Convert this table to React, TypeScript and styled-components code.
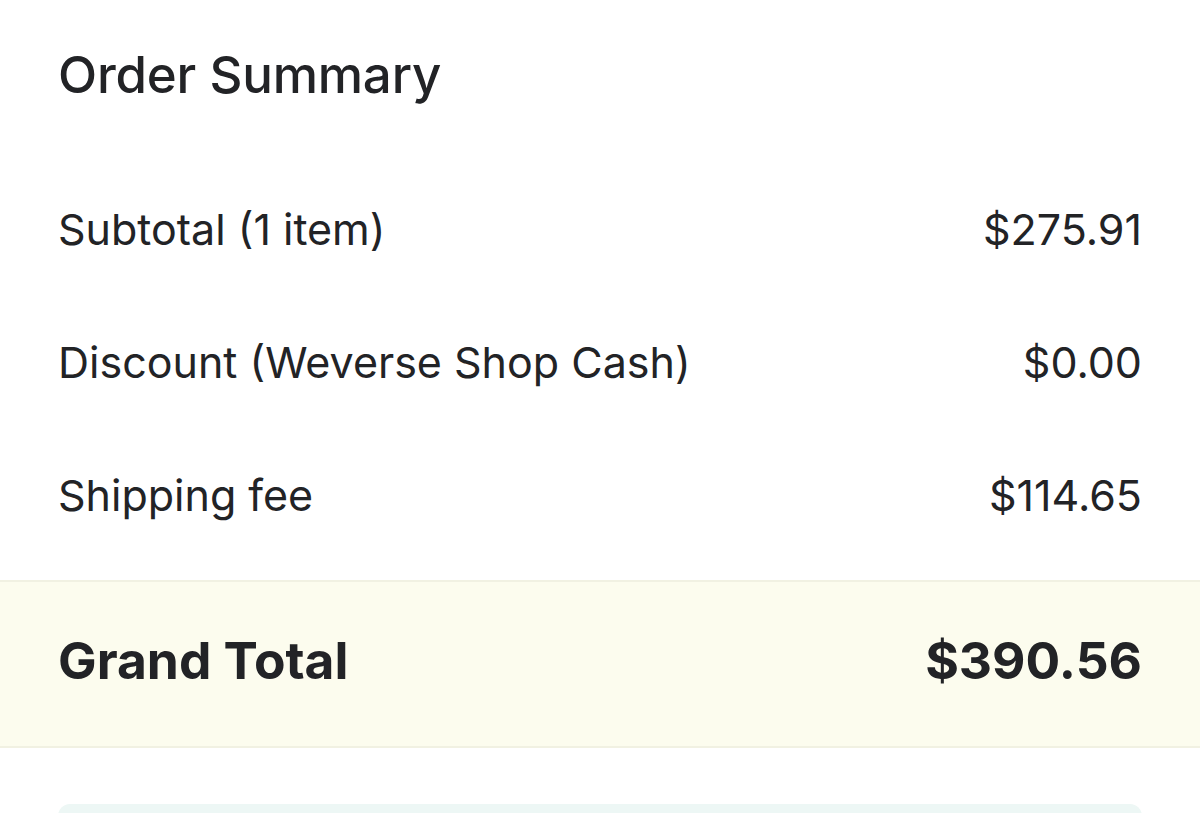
import React from 'react';
import styled, { createGlobalStyle } from 'styled-components';

const GlobalStyle = createGlobalStyle`
  html, body {
    margin: 0;
    padding: 0;
    background: #ffffff;
  }
  body {
    font-family: Inter, "Noto Sans", "Liberation Sans", sans-serif;
    color: #222326;
    -webkit-font-smoothing: antialiased;
  }
`;

const Page = styled.div`
  width: 1200px;
  height: 813px;
  overflow: hidden;
  display: flex;
  flex-direction: column;

  & > * {
    flex-shrink: 0;
  }
`;

const Title = styled.h1`
  margin: 0;
  padding: 46px 58px 0;
  height: 102px;
  box-sizing: border-box;
  font-size: 51px;
  font-weight: 500;
  letter-spacing: -0.2px;
  line-height: 58px;
`;

const Rows = styled.div`
  display: flex;
  flex-direction: column;
  padding-top: 60px;
`;

const Row = styled.div`
  display: flex;
  justify-content: space-between;
  align-items: center;
  height: 133px;
  padding: 0 58px;
  box-sizing: border-box;
  font-size: 43px;
  font-weight: 400;
`;

const Total = styled.div`
  display: flex;
  justify-content: space-between;
  align-items: center;
  height: 168px;
  margin-top: 19px;
  padding: 0 58px 8px;
  box-sizing: border-box;
  background: #fcfcee;
  border-top: 2px solid #f1f1e2;
  border-bottom: 2px solid #f1f1e2;
  font-size: 51.5px;
  font-weight: 700;
`;

const Notice = styled.div`
  margin: 56px 58px 0;
  height: 60px;
  border-radius: 12px;
  background: #edf7f5;
`;

const rows = [
  { label: 'Subtotal (1 item)', value: '$275.91' },
  { label: 'Discount (Weverse Shop Cash)', value: '$0.00' },
  { label: 'Shipping fee', value: '$114.65' },
];

export default function App() {
  return (
    <Page>
      <GlobalStyle />
      <Title>Order Summary</Title>
      <Rows>
        {rows.map((r) => (
          <Row key={r.label}>
            <span>{r.label}</span>
            <span>{r.value}</span>
          </Row>
        ))}
      </Rows>
      <Total>
        <span>Grand Total</span>
        <span>$390.56</span>
      </Total>
      <Notice />
    </Page>
  );
}
